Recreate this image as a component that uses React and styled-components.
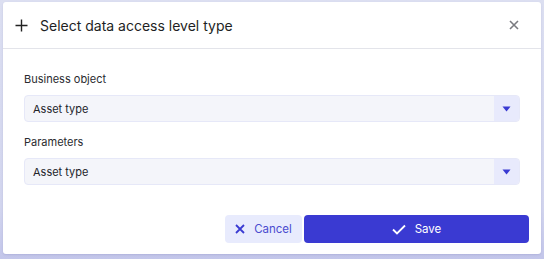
import React from 'react'
import styled, { createGlobalStyle } from 'styled-components'

const GlobalStyle = createGlobalStyle`
  html, body {
    margin: 0;
    padding: 0;
    background: #d8dbf0;
    font-family: Inter, "Noto Sans", sans-serif;
  }
`

const Backdrop = styled.div`
  width: 544px;
  height: 259px;
  box-sizing: border-box;
  padding: 2px 3px 5px 3px;
  background: linear-gradient(180deg, #dcdff1 0%, #d2d5ee 80%, #c3c6ea 100%);
`

const Dialog = styled.div`
  height: 100%;
  background: #fff;
  border-radius: 3px;
  box-shadow: 0 1px 2px rgba(60, 60, 140, 0.15);
  display: flex;
  flex-direction: column;
`

const Header = styled.div`
  height: 46px;
  display: flex;
  align-items: center;
  padding: 0 22px 0 12px;
  border-bottom: 1px solid #e3e4ea;
`

const Title = styled.h2`
  flex: 1;
  margin: 0 0 0 12px;
  font-size: 14px;
  font-weight: 400;
  color: #1e1f24;
`

const CloseButton = styled.button`
  border: 0;
  background: none;
  padding: 0;
  display: flex;
  color: #7a7b80;
`

const Body = styled.div`
  padding: 23px 21px 0 21px;
  display: flex;
  flex-direction: column;
`

const Label = styled.div`
  font-size: 11px;
  color: #2a2b30;
  margin-bottom: 9px;
`

const Select = styled.div`
  height: 27px;
  box-sizing: border-box;
  display: flex;
  border: 1px solid #e6e8f8;
  border-radius: 4px;
  background: #f4f5fa;
  overflow: hidden;
  margin-bottom: ${p => p.$gap || 0}px;
`

const SelectValue = styled.div`
  flex: 1;
  display: flex;
  align-items: center;
  padding-left: 8px;
  font-size: 11px;
  color: #23242a;
`

const Caret = styled.div`
  width: 25px;
  display: flex;
  align-items: center;
  justify-content: center;
  background: #e8eafc;
`

const Footer = styled.div`
  margin-top: auto;
  padding: 0 12px 11px 0;
  display: flex;
  justify-content: flex-end;
  gap: 2px;
`

const Button = styled.button`
  height: 28px;
  border: 0;
  border-radius: 4px;
  display: flex;
  align-items: center;
  justify-content: center;
  gap: 9px;
  font-family: inherit;
  font-size: 11.5px;
  width: ${p => p.$width}px;
  background: ${p => (p.$primary ? '#3a3ad2' : '#e8ebfd')};
  color: ${p => (p.$primary ? '#ffffff' : '#4b4bd0')};
`

const CaretIcon = () => (
  <svg width="9" height="7" viewBox="0 0 9 7">
    <path d="M0.5 1.5h8L4.5 6.5z" fill="#3a3ad2" />
  </svg>
)

const Field = ({ label, value, gap }) => (
  <>
    <Label>{label}</Label>
    <Select $gap={gap}>
      <SelectValue>{value}</SelectValue>
      <Caret>
        <CaretIcon />
      </Caret>
    </Select>
  </>
)

export default function App() {
  return (
    <>
      <GlobalStyle />
      <Backdrop>
        <Dialog>
          <Header>
            <svg width="13" height="13" viewBox="0 0 13 13">
              <path d="M6.5 0.5v12M0.5 6.5h12" stroke="#222" strokeWidth="1.4" />
            </svg>
            <Title>Select data access level type</Title>
            <CloseButton aria-label="Close">
              <svg width="10" height="10" viewBox="0 0 10 10">
                <path d="M1 1l8 8M9 1l-8 8" stroke="#7a7b80" strokeWidth="1.6" />
              </svg>
            </CloseButton>
          </Header>
          <Body>
            <Field label="Business object" value="Asset type" gap={13} />
            <Field label="Parameters" value="Asset type" />
          </Body>
          <Footer>
            <Button $width={77}>
              <svg width="10" height="10" viewBox="0 0 10 10">
                <path d="M1 1l8 8M9 1l-8 8" stroke="#3a3ad2" strokeWidth="1.8" />
              </svg>
              Cancel
            </Button>
            <Button $primary $width={225}>
              <svg width="14" height="11" viewBox="0 0 14 11">
                <path d="M1 5.5l4 4L13 1.5" stroke="#fff" strokeWidth="1.8" fill="none" />
              </svg>
              Save
            </Button>
          </Footer>
        </Dialog>
      </Backdrop>
    </>
  )
}
